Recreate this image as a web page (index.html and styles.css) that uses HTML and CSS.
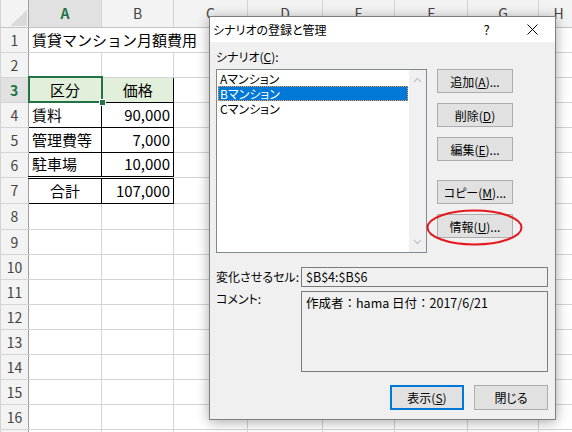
FILE: index.html
```html
<!DOCTYPE html>
<html lang="ja">
<head>
    <meta charset="UTF-8">
    <title>シナリオの登録と管理</title>
    <link rel="stylesheet" href="styles.css">
</head>
<body>
    <table class="sheet">
        <colgroup>
            <col class="c-head"><col class="c-a"><col class="c-b"><col class="c-c"><col class="c-d"><col class="c-e"><col class="c-f"><col class="c-g"><col class="c-h">
        </colgroup>
        <tr class="col-heads">
            <th class="corner">
                <svg width="20" height="18" viewBox="0 0 20 18"><polygon points="19,1 19,17 2,17" fill="#dadada"/></svg>
            </th>
            <th class="sel-col">A</th><th>B</th><th>C</th><th>D</th><th>E</th><th>F</th><th>G</th><th>H</th>
        </tr>
        <tr>
            <th>1</th><td class="title-cell">賃貸マンション月額費用</td><td class="title-cell"></td><td></td><td></td><td></td><td></td><td></td><td></td>
        </tr>
        <tr>
            <th>2</th><td></td><td></td><td></td><td></td><td></td><td></td><td></td><td></td>
        </tr>
        <tr>
            <th class="sel-row">3</th>
            <td class="box head active">区分<span class="fill-handle"></span></td>
            <td class="box head">価格</td>
            <td></td><td></td><td></td><td></td><td></td><td></td>
        </tr>
        <tr>
            <th>4</th><td class="box">賃料</td><td class="box num">90,000</td><td></td><td></td><td></td><td></td><td></td><td></td>
        </tr>
        <tr>
            <th>5</th><td class="box">管理費等</td><td class="box num">7,000</td><td></td><td></td><td></td><td></td><td></td><td></td>
        </tr>
        <tr>
            <th>6</th><td class="box before-total">駐車場</td><td class="box num before-total">10,000</td><td></td><td></td><td></td><td></td><td></td><td></td>
        </tr>
        <tr class="total-row">
            <th>7</th><td class="box center">合計</td><td class="box num">107,000</td><td></td><td></td><td></td><td></td><td></td><td></td>
        </tr>
        <tr class="row-8">
            <th>8</th><td></td><td></td><td></td><td></td><td></td><td></td><td></td><td></td>
        </tr>
        <tr>
            <th>9</th><td></td><td></td><td></td><td></td><td></td><td></td><td></td><td></td>
        </tr>
        <tr>
            <th>10</th><td></td><td></td><td></td><td></td><td></td><td></td><td></td><td></td>
        </tr>
        <tr>
            <th>11</th><td></td><td></td><td></td><td></td><td></td><td></td><td></td><td></td>
        </tr>
        <tr>
            <th>12</th><td></td><td></td><td></td><td></td><td></td><td></td><td></td><td></td>
        </tr>
        <tr>
            <th>13</th><td></td><td></td><td></td><td></td><td></td><td></td><td></td><td></td>
        </tr>
        <tr>
            <th>14</th><td></td><td></td><td></td><td></td><td></td><td></td><td></td><td></td>
        </tr>
        <tr>
            <th>15</th><td></td><td></td><td></td><td></td><td></td><td></td><td></td><td></td>
        </tr>
        <tr>
            <th>16</th><td></td><td></td><td></td><td></td><td></td><td></td><td></td><td></td>
        </tr>
        <tr>
            <th></th><td></td><td></td><td></td><td></td><td></td><td></td><td></td><td></td>
        </tr>
    </table>

    <div class="dialog">
        <div class="titlebar">
            <span class="title">シナリオの登録と管理</span>
            <span class="help">?</span>
            <span class="close">
                <svg width="11" height="11" viewBox="0 0 11 11"><path d="M0.5 0.5 L10.5 10.5 M10.5 0.5 L0.5 10.5" stroke="#000" stroke-width="1" fill="none"/></svg>
            </span>
        </div>
        <div class="dialog-body">
            <div class="list-label">シナリオ(<u>C</u>):</div>
            <div class="main">
                <div class="listbox">
                    <ul class="items">
                        <li>Aマンション</li>
                        <li class="selected">Bマンション</li>
                        <li>Cマンション</li>
                    </ul>
                    <div class="scrollbar">
                        <svg width="9" height="6" viewBox="0 0 9 6"><path d="M1 5 L4.5 1.5 L8 5" stroke="#c5c5c5" stroke-width="1.3" fill="none"/></svg>
                        <svg width="9" height="6" viewBox="0 0 9 6"><path d="M1 1 L4.5 4.5 L8 1" stroke="#c5c5c5" stroke-width="1.3" fill="none"/></svg>
                    </div>
                </div>
                <div class="side-buttons">
                    <button>追加(<u>A</u>)...</button>
                    <button>削除(<u>D</u>)</button>
                    <button>編集(<u>E</u>)...</button>
                    <button class="copy">コピー(<u>M</u>)...</button>
                    <button>情報(<u>U</u>)...</button>
                </div>
            </div>
            <div class="field">
                <span class="field-label">変化させるセル:</span>
                <div class="field-box">$B$4:$B$6</div>
            </div>
            <div class="field comment">
                <span class="field-label">コメント:</span>
                <div class="field-box tall">作成者：hama 日付：2017/6/21</div>
            </div>
            <div class="footer">
                <button class="default">表示(<u>S</u>)</button>
                <button>閉じる</button>
            </div>
        </div>
    </div>

    <!-- red circle drawn over the 情報 button -->
    <svg class="mark" width="98" height="38" viewBox="0 0 98 38">
        <ellipse cx="48.5" cy="18.5" rx="47" ry="17" fill="none" stroke="#e3191e" stroke-width="2"/>
    </svg>
</body>
</html>
```

FILE: styles.css
```css
body {
    margin: 0;
    width: 572px;
    height: 432px;
    overflow: hidden;
    position: relative;
    background: #fff;
    font-family: "Noto Sans CJK JP", "Noto Sans", sans-serif;
}

/* spreadsheet */
.sheet {
    border-collapse: collapse;
    table-layout: fixed;
    width: 578px;
    font-size: 15px;
    color: #000;
}
.c-head { width: 28px; }
.c-a { width: 73px; }
.c-b { width: 72px; }
.c-c { width: 74px; }
.c-d { width: 75px; }
.c-e { width: 72px; }
.c-f { width: 73px; }
.c-g { width: 71px; }
.c-h { width: 40px; }

.sheet tr {
    height: 25px;
}
.sheet td,
.sheet th {
    border: 1px solid #d4d4d4;
    padding: 0 3px;
    white-space: nowrap;
    overflow: visible;
    line-height: 20px;
    font-weight: normal;
}
.sheet th {
    background: #f3f3f3;
    color: #444;
    font-size: 14px;
    padding: 0;
    text-align: center;
}
.sheet tr th:first-child {
    border-right: 1px solid #9e9e9e;
}
.sheet tr.col-heads {
    height: 27px;
}
.sheet tr.col-heads th {
    border-top: none;
    border-bottom: 1px solid #c4c4c4;
}
.sheet th.corner {
    vertical-align: bottom;
    text-align: right;
    line-height: 0;
}
.sheet th.sel-col {
    background: #e1e1e1;
    color: #217346;
    font-weight: bold;
    border-bottom: 2px solid #217346;
}
.sheet tr th.sel-row {
    background: #e1e1e1;
    color: #217346;
    font-weight: bold;
    border-right: 2px solid #217346;
}

.sheet td.title-cell {
    border-right-style: hidden;
}
.sheet td.box {
    border: 1px solid #000;
}
.sheet td.head {
    background: #e2efda;
    text-align: center;
}
.sheet td.num {
    text-align: right;
}
.sheet td.center {
    text-align: center;
}
.sheet td.before-total {
    border-bottom: 3px double #000;
}
.sheet tr.total-row,
.sheet tr.row-8 {
    height: 26px;
}
.sheet td.active {
    position: relative;
    border: 2px solid #217346;
}
.fill-handle {
    position: absolute;
    right: -5px;
    bottom: -5px;
    width: 5px;
    height: 5px;
    background: #217346;
    border: 1px solid #fff;
}

/* dialog */
.dialog {
    position: absolute;
    left: 209px;
    top: 16px;
    width: 347px;
    height: 404px;
    box-sizing: border-box;
    border: 1px solid #7f7f7f;
    background: #f0f0f0;
    box-shadow: 0 2px 12px rgba(0, 0, 0, 0.35);
    font-size: 12px;
    font-feature-settings: "palt";
    color: #000;
}
.titlebar {
    display: flex;
    align-items: center;
    height: 25px;
    background: #fff;
}
.title {
    flex: 1;
    padding-left: 3px;
}
.help {
    width: 45px;
    text-align: center;
    font-size: 13px;
}
.close {
    width: 46px;
    display: flex;
    justify-content: center;
}
.dialog-body {
    padding: 7px 7px 9px 6px;
}
.list-label {
    line-height: 16px;
    margin-bottom: 4px;
}
.main {
    display: flex;
    gap: 10px;
    height: 184px;
}
.listbox {
    width: 211px;
    box-sizing: border-box;
    border: 1px solid #828790;
    background: #fff;
    display: flex;
}
.items {
    flex: 1;
    list-style: none;
    margin: 0;
    padding: 1px;
}
.items li {
    height: 15px;
    line-height: 15px;
    padding-left: 2px;
    box-sizing: border-box;
}
.items li.selected {
    background: #0078d7;
    color: #fff;
    outline: 1px dotted #ff9a3c;
    outline-offset: -1px;
}
.scrollbar {
    width: 17px;
    background: #f0f0f0;
    display: flex;
    flex-direction: column;
    justify-content: space-between;
    align-items: center;
    padding: 7px 0 7px;
    box-sizing: border-box;
}
.side-buttons {
    display: flex;
    flex-direction: column;
    gap: 10px;
}
button {
    font-family: inherit;
    font-size: 12px;
    font-feature-settings: "palt";
    color: #000;
    background: #e1e1e1;
    border: 1px solid #adadad;
    padding: 0;
    margin: 0;
}
.side-buttons button {
    width: 76px;
    height: 24px;
}
.side-buttons button.copy {
    margin-top: 9px;
}
.field {
    display: flex;
    align-items: center;
    margin-top: 14px;
}
.field.comment {
    margin-top: 4px;
    align-items: flex-start;
}
.field-label {
    width: 85px;
    line-height: 16px;
}
.field-box {
    width: 247px;
    height: 20px;
    box-sizing: border-box;
    border: 1px solid #7a7a7a;
    padding: 0 4px;
    line-height: 18px;
    font-size: 12.5px;
    font-feature-settings: normal;
}
.field-box.tall {
    height: 81px;
    padding-top: 2px;
}
.footer {
    display: flex;
    justify-content: flex-end;
    gap: 10px;
    margin-top: 13px;
}
.footer button {
    width: 74px;
    height: 25px;
}
.footer button.default {
    border: 2px solid #0078d7;
}

.mark {
    position: absolute;
    left: 426px;
    top: 209px;
}
```
